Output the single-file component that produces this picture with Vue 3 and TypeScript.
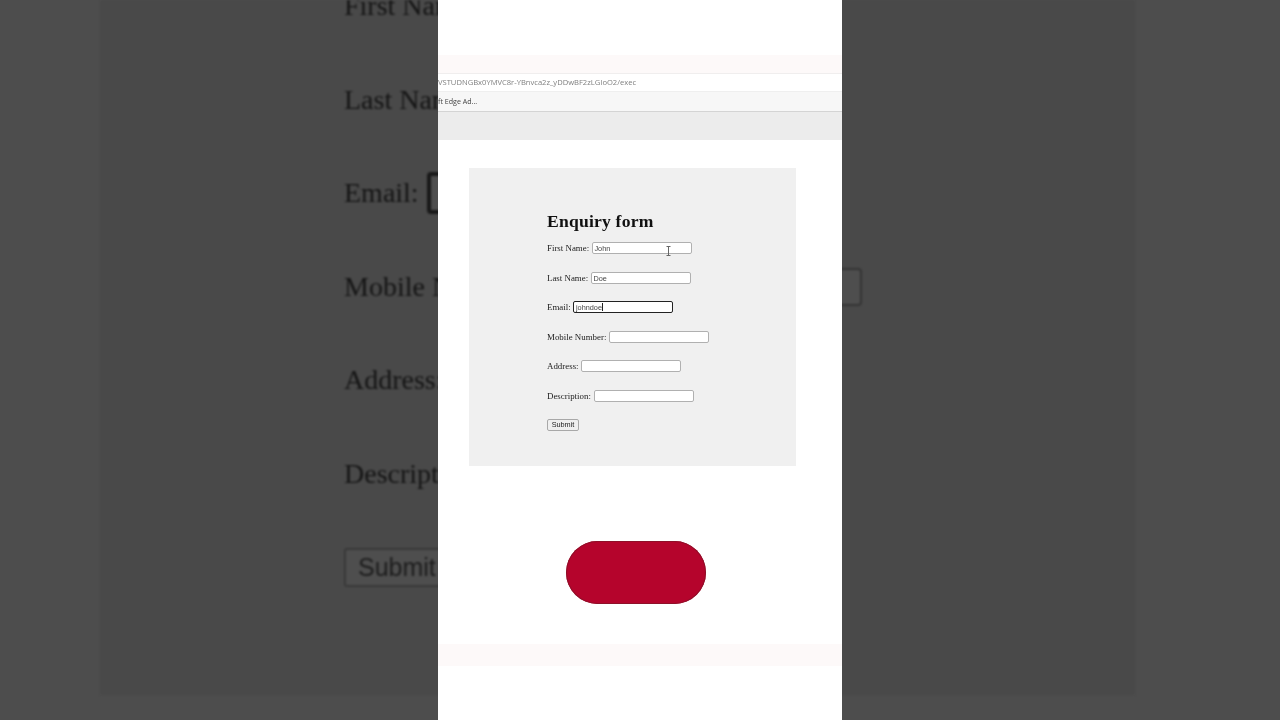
<script setup lang="ts">
interface Field {
  label: string
  value: string
  focused?: boolean
}

const fields: Field[] = [
  { label: 'First Name:', value: 'John' },
  { label: 'Last Name:', value: 'Doe' },
  { label: 'Email:', value: 'johndoe', focused: true },
  { label: 'Mobile Number:', value: '' },
  { label: 'Address:', value: '' },
  { label: 'Description:', value: '' }
]
</script>

<template>
  <div class="stage">
    <div class="backdrop" aria-hidden="true">
      <div class="bg-form">
        <div v-for="f in fields" :key="f.label" class="bg-row">
          <span>{{ f.label }}</span>
          <span class="bg-input" :class="{ 'bg-focus': f.focused }"></span>
        </div>
        <div class="bg-row"><span class="bg-button">Submit</span></div>
      </div>
    </div>

    <main class="phone">
      <div class="blank-top"></div>
      <div class="tint-strip"></div>
      <div class="url-bar"><span class="url">VSTUDNGBx0YMVC8r-YBnvca2z_yDDwBF2zLGIoO2/exec</span></div>
      <div class="bookmarks"><span>ft Edge Ad...</span></div>
      <div class="grey-band"></div>

      <div class="page">
        <section class="card">
          <h2>Enquiry form</h2>
          <div v-for="f in fields" :key="f.label" class="row">
            <label>{{ f.label }}</label>
            <span class="input" :class="{ focus: f.focused }">{{ f.value }}<i v-if="f.focused" class="caret"></i></span>
            <svg v-if="f.label === 'First Name:'" class="ibeam" width="5" height="10" viewBox="0 0 5 10">
              <path d="M.5.5h4M2.5.5v9M.5 9.5h4" fill="none" stroke="#666" stroke-width="1" />
            </svg>
          </div>
          <button class="submit" type="button">Submit</button>
        </section>
      </div>

      <div class="cta-wrap"><div class="cta"></div></div>
      <div class="tint-strip bottom"></div>
    </main>
  </div>
</template>

<style>
html,
body {
  margin: 0;
  background: #4d4d4d;
}
</style>

<style scoped>
.stage {
  display: grid;
  width: 1280px;
  height: 720px;
  overflow: hidden;
  background: #4d4d4d;
}
.backdrop,
.phone {
  grid-area: 1 / 1;
}
.backdrop {
  width: 1035px;
  height: 695px;
  margin-left: 100px;
  overflow: hidden;
  background: #494949;
  filter: blur(1.3px);
}
.bg-form {
  margin-top: -41px;
  padding-left: 244px;
  font: 28px/93.6px "Liberation Serif", serif;
  color: #141414;
}
.bg-row {
  display: flex;
  align-items: center;
  gap: 8px;
  height: 93.6px;
  white-space: nowrap;
}
.bg-input {
  flex: none;
  width: 319px;
  height: 34px;
  border: 2px solid #343434;
  border-radius: 4px;
  background: #4e4e4e;
}
.bg-focus {
  border: 4px solid #181818;
}
.bg-button {
  display: flex;
  align-items: center;
  height: 35px;
  padding: 0 12px;
  border: 2px solid #383838;
  border-radius: 3px;
  font: 25px "Liberation Sans", sans-serif;
  background: #4e4e4e;
  color: #1c1c1c;
}

.phone {
  position: relative;
  display: flex;
  flex-direction: column;
  justify-self: center;
  width: 404px;
  height: 720px;
  background: #fff;
  overflow: hidden;
}
.blank-top {
  height: 55px;
}
.tint-strip {
  height: 18px;
  background: #fdf9f9;
}
.url-bar {
  display: flex;
  align-items: center;
  height: 18px;
  padding-bottom: 1px;
  border-top: 1px solid #f0eeee;
  box-sizing: border-box;
  background: #fff;
}
.url {
  font: 7.6px "Open Sans", sans-serif;
  color: #808080;
  white-space: nowrap;
  margin-left: 0;
  filter: blur(0.3px);
}
.bookmarks {
  display: flex;
  align-items: center;
  height: 21px;
  padding-bottom: 2px;
  box-sizing: border-box;
  border-top: 1px solid #efefef;
  border-bottom: 1px solid #d4d4d4;
  background: #f7f7f7;
  font: 7.1px "Open Sans", sans-serif;
  color: #444;
}
.bookmarks span {
  filter: blur(0.25px);
}
.grey-band {
  height: 28px;
  background: #ececec;
}
.page {
  padding: 28px 46px 0 31px;
}
.card {
  box-sizing: border-box;
  height: 298px;
  padding: 43px 0 0 78px;
  background: #f0f0f0;
  font: 8.9px "Liberation Serif", serif;
  color: #222;
}
.card > * {
  filter: blur(0.3px);
}
h2 {
  margin: 0 0 11px;
  font: bold 17.6px/20px "Liberation Serif", serif;
  letter-spacing: 0.2px;
  color: #111;
}
.row {
  position: relative;
  display: flex;
  align-items: center;
  gap: 2.8px;
  height: 12px;
  margin-bottom: 17.5px;
}
.input {
  display: block;
  flex: none;
  box-sizing: border-box;
  width: 100px;
  height: 12px;
  padding: 1px 1.5px 0;
  border: 1px solid #b0b0b0;
  border-radius: 2px;
  background: #fff;
  font: 7.3px/9px "Liberation Sans", sans-serif;
  color: #444;
}
.input.focus {
  padding-top: 0.5px;
  border: 1.5px solid #222;
  line-height: 9px;
}
.caret {
  display: inline-block;
  width: 1px;
  height: 8px;
  vertical-align: -1px;
  background: #222;
}
.ibeam {
  position: absolute;
  left: 119px;
  top: 4px;
}
.submit {
  display: block;
  box-sizing: border-box;
  width: 32px;
  height: 12px;
  margin-top: 0.5px;
  padding: 0;
  border: 1px solid #a8a8a8;
  border-radius: 2px;
  background: #efefef;
  font: 7.3px/10px "Liberation Sans", sans-serif;
  color: #222;
}
.cta-wrap {
  display: flex;
  padding: 75px 0 0 128px;
}
.cta {
  width: 140px;
  height: 63px;
  border-radius: 32px;
  background: #b5042c;
  box-shadow: inset 0 0 0 1px #8e1029;
}
.bottom {
  height: 22px;
  margin-top: 40px;
}
</style>
